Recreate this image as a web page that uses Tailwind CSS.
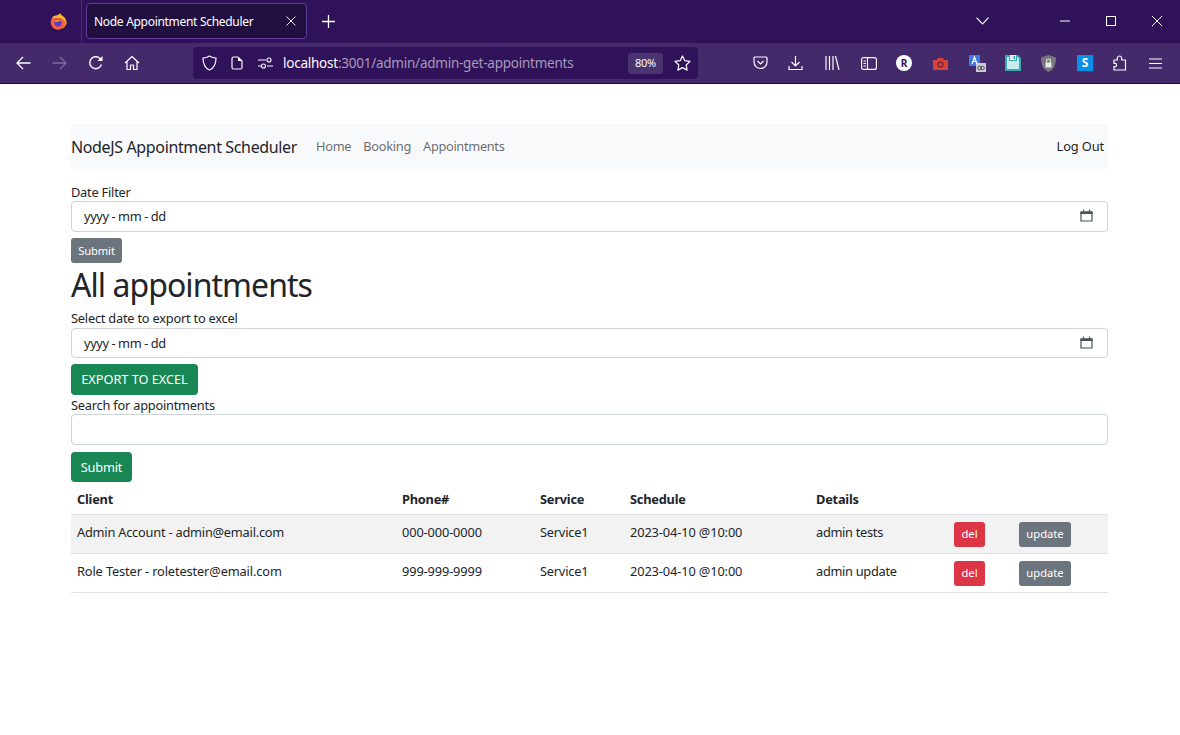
<!DOCTYPE html>
<html lang="en">
<head>
<meta charset="UTF-8" />
<title>Node Appointment Scheduler</title>
<script src="https://cdn.jsdelivr.net/npm/@tailwindcss/browser@4"></script>
</head>
<body class="bg-white h-[735px] w-[1180px] overflow-hidden font-['Noto_Sans',sans-serif] text-[#212529] text-[12.8px] tracking-[-0.22px]">

<!-- TAB BAR -->
<div class="h-[43px] bg-[#2f1259] flex items-start relative tracking-normal">
  <div class="w-[82px] h-[43px] border-r border-[#4a2f78] flex items-center justify-end pr-[14px] shrink-0">
    <svg class="mb-[1px]" width="17" height="17" viewBox="0 0 17 17">
      <circle cx="8" cy="9.500" r="7.300" fill="#f2603f"/>
      <path d="M1.500 5.500C3 3 5 2 7 2.500 8.500 1.500 9.500 1 11 0c-.5 1 0 2 1 2.500 2.500 1.500 4.500 3.500 4.500 7 0 1-.2 2-.6 3C15.500 8 13 5.500 9.500 5 6.500 4.500 3 5 1.500 5.500z" fill="#fdb52d"/>
      <path d="M15.500 6c1 2 1.200 5-.5 7.500-1 1.300-2 2-3 2.500 2-2.500 3.500-6 3.500-10z" fill="#ff8a2b"/>
      <circle cx="8" cy="9.800" r="3.700" fill="#5b3bc4"/>
      <path d="M4.500 8.500C6 6 10 6 11.500 8.500 10 7.500 8.500 8 7.500 8.500 6.500 9 5.500 9 4.500 8.500z" fill="#ff9f45"/>
    </svg>
  </div>
  <div class="ml-[4px] mt-[3px] w-[221px] h-[36px] rounded-[4px] border border-[#5f3f99] bg-[#21103f] flex items-center pl-[7px] pr-[10px] text-white text-[12px] shrink-0">
    <span class="tracking-[-0.3px] pt-[2px]">Node Appointment Scheduler</span>
    <svg class="ml-auto" width="10" height="10" viewBox="0 0 10 10"><path d="M0.500 0.500l9 9M9.500 0.500l-9 9" stroke="#e8e4f0" stroke-width="1"/></svg>
  </div>
  <svg class="ml-[15px] mt-[15px]" width="13" height="13" viewBox="0 0 13 13"><path d="M6.500 0v13M0 6.500h13" stroke="#fff" stroke-width="1.300"/></svg>
  <div class="ml-auto flex items-center h-[40px]">
    <svg class="mr-[71px] mt-[1px]" width="13" height="8" viewBox="0 0 13 8"><path d="M0.500 0.700L6.500 7l6-6.300" fill="none" stroke="#fff" stroke-width="1.100"/></svg>
    <svg class="mr-[36px] mt-[1px]" width="10" height="2" viewBox="0 0 10 2"><path d="M0 1h10" stroke="#fff" stroke-width="1"/></svg>
    <svg class="mr-[36px] mt-[1px]" width="10" height="10" viewBox="0 0 10 10"><rect x="0.500" y="0.500" width="9" height="9" fill="none" stroke="#fff" stroke-width="1"/></svg>
    <svg class="mr-[18px] mt-[1px]" width="10" height="10" viewBox="0 0 10 10"><path d="M0 0l10 10M10 0L0 10" stroke="#fff" stroke-width="1"/></svg>
  </div>
</div>

<!-- TOOLBAR -->
<div class="h-[41px] bg-[#44296b] border-b border-[#1d1035] flex items-center relative tracking-normal">
  <div class="w-[193px] flex items-center shrink-0">
    <svg class="ml-[16px]" width="15" height="14" viewBox="0 0 15 14"><path d="M14.500 7H1M7 1L1 7l6 6" fill="none" stroke="#fbfbfe" stroke-width="1.300"/></svg>
    <svg class="ml-[21px]" width="15" height="14" viewBox="0 0 15 14"><path d="M0.500 7H14M8 1l6 6-6 6" fill="none" stroke="#7d6a9c" stroke-width="1.300"/></svg>
    <svg class="ml-[21px]" width="16" height="16" viewBox="0 0 16 16"><path d="M13.500 9.500A6 6 0 1 1 11.500 3L14 5" fill="none" stroke="#fbfbfe" stroke-width="1.400"/><path d="M14.500 1v5h-5z" fill="#fbfbfe"/></svg>
    <svg class="ml-[20px]" width="16" height="16" viewBox="0 0 16 16"><path d="M1 8l7-6.500L15 8M3 6.500V14.500H6.500V10h3v4.500H13V6.500" fill="none" stroke="#fbfbfe" stroke-width="1.200" stroke-linejoin="round"/></svg>
  </div>
  <div class="w-[505px] h-[32px] bg-[#2f1259] rounded-[4px] flex items-center shrink-0 text-[13.500px] pl-[9px]">
    <svg width="15" height="16" viewBox="0 0 15 16"><path d="M7.500 1c2 1.300 4 2 6.500 2 0 6-1.500 10-6.500 12C2.500 13 1 9 1 3c2.500 0 4.500-.7 6.500-2z" fill="none" stroke="#fbfbfe" stroke-width="1.200"/></svg>
    <svg class="ml-[14px]" width="12" height="14" viewBox="0 0 12 14"><path d="M1 2.500A1.500 1.500 0 0 1 2.500 1H7l4 4v6.500A1.500 1.500 0 0 1 9.500 13h-7A1.500 1.500 0 0 1 1 11.500z" fill="none" stroke="#fbfbfe" stroke-width="1.200"/><path d="M7 1v4h4z" fill="#fbfbfe"/></svg>
    <svg class="ml-[15px]" width="15" height="12" viewBox="0 0 15 12"><path d="M0 3h8M0 9h3M9 9h6" stroke="#fbfbfe" stroke-width="1.100"/><circle cx="11" cy="3" r="2" fill="none" stroke="#fbfbfe" stroke-width="1.100"/><circle cx="5.500" cy="9" r="2" fill="none" stroke="#fbfbfe" stroke-width="1.100"/></svg>
    <span class="ml-[10px] pt-[1px] text-[#fbfbfe] tracking-[-0.24px]">localhost<span class="text-[#a79bbb]">:3001/admin/admin-get-appointments</span></span>
    <span class="ml-auto w-[35px] h-[21px] rounded-[3px] bg-[#4a3470] flex items-center justify-center text-[11px] tracking-[-0.3px] text-[#fbfbfe]">80%</span>
    <svg class="ml-[11px] mr-[7px]" width="17" height="16" viewBox="0 0 17 16"><path d="M8.500 1l2.300 4.700 5.200.7-3.800 3.600.9 5.100-4.600-2.500-4.600 2.500.9-5.100L1 6.400l5.200-.7z" fill="none" stroke="#fbfbfe" stroke-width="1.200" stroke-linejoin="round"/></svg>
  </div>
  <div class="flex-1 flex items-center h-full pl-[55px]">
    <div class="w-[36px]"><svg width="15" height="14" viewBox="0 0 15 14"><path d="M2 1h11a1 1 0 0 1 1 1v4a6.500 6.500 0 0 1-13 0V2a1 1 0 0 1 1-1z" fill="none" stroke="#fbfbfe" stroke-width="1.200"/><path d="M4.500 5l3 3 3-3" fill="none" stroke="#fbfbfe" stroke-width="1.200"/></svg></div>
    <div class="w-[36px] ml-[-1px] mr-[1px]"><svg width="15" height="15" viewBox="0 0 15 15"><path d="M7.500 0v9.500M3.500 6l4 4 4-4M1 10v3.500h13V10" fill="none" stroke="#fbfbfe" stroke-width="1.200"/></svg></div>
    <div class="w-[36px]"><svg width="15" height="14" viewBox="0 0 15 14"><path d="M1 0v14M4.500 0v14M8 0v14M10.500 0L14 14" fill="none" stroke="#fbfbfe" stroke-width="1.200"/></svg></div>
    <div class="w-[36px]"><svg width="16" height="13" viewBox="0 0 16 13"><rect x="0.600" y="0.600" width="14.800" height="11.800" rx="2" fill="none" stroke="#fbfbfe" stroke-width="1.200"/><path d="M6.500 1v11M2.500 4h2.500M2.500 6.500h2.500M2.500 9h2.500" stroke="#fbfbfe" stroke-width="1.100"/></svg></div>
    <div class="w-[36px] ml-[-1px] mr-[1px]"><div class="w-[16px] h-[16px] rounded-full bg-white text-[#2f1259] text-[10px] font-bold flex items-center justify-center">R</div></div>
    <div class="w-[36px]"><svg width="15" height="13" viewBox="0 0 15 13"><path d="M0 3h4l1-2h5l1 2h4v10H0z" fill="#d6423f"/><circle cx="7.500" cy="7.500" r="2.500" fill="none" stroke="#7d2230" stroke-width="1.300"/></svg></div>
    <div class="w-[36px]"><svg width="17" height="17" viewBox="0 0 17 17"><rect x="0" y="0" width="11" height="11" fill="#3f78e0"/><rect x="7" y="8" width="10" height="9" fill="#c9ccd6"/><path d="M3 9l2.500-7L8 9M4 6.500h3" fill="none" stroke="#fff" stroke-width="1.200"/><circle cx="10.500" cy="13" r="1.800" fill="none" stroke="#555" stroke-width="1"/><circle cx="13.500" cy="13" r="1.800" fill="none" stroke="#555" stroke-width="1"/></svg></div>
    <div class="w-[36px]"><svg width="16" height="16" viewBox="0 0 16 16"><path d="M0 0h13l3 3v13H0z" fill="#3aaab2"/><path d="M2 2h10.500l1.500 1.500V14H2z" fill="#c9ecef"/><rect x="4" y="0" width="8" height="6" fill="#3aaab2"/><rect x="5" y="0" width="6" height="5" fill="#dff4f5"/><rect x="8.500" y="1" width="1.500" height="3" fill="#3aaab2"/></svg></div>
    <div class="w-[36px]"><svg width="15" height="17" viewBox="0 0 15 17"><path d="M7.500 0L15 2.500c0 7-2 12-7.500 14.500C2 14.500 0 9.500 0 2.500z" fill="#77757d"/><rect x="4.500" y="7.500" width="6" height="5" fill="#e8e8ea"/><path d="M5.500 7.500V6a2 2 0 0 1 4 0v1.500" fill="none" stroke="#e8e8ea" stroke-width="1.100"/></svg></div>
    <div class="w-[36px]"><div class="w-[16px] h-[16px] bg-[#0a8fe6] text-white text-[12px] font-bold flex items-center justify-center shadow-[1px_1px_0_#0b4f94]">S</div></div>
    <div class="w-[36px]"><svg width="14" height="16" viewBox="0 0 14 16"><path d="M1 5h3.500C4 4 4 1 6.500 1S9 4 8.500 5H12.500V15H1v-3.500c1.500.5 2.500 0 2.500-1.500S2.500 8 1 8.500z" fill="none" stroke="#fbfbfe" stroke-width="1.200" stroke-linejoin="round"/></svg></div>
    <svg width="13" height="11" viewBox="0 0 13 11"><path d="M0 1h13M0 5.500h13M0 10h13" stroke="#fbfbfe" stroke-width="1.200"/></svg>
  </div>
</div>

<!-- PAGE -->
<div class="w-[1037px] ml-[71px] mt-[40px]">
  <nav class="h-[45px] bg-[#f8f9fa] flex items-center pr-[4px]">
    <span class="text-[16px] mr-[19px] tracking-[-0.36px]">NodeJS Appointment Scheduler</span>
    <a class="text-[#00000099] mr-[12px] tracking-[-0.28px] pt-[1px]">Home</a>
    <a class="text-[#00000099] mr-[12px] tracking-[-0.28px] pt-[1px]">Booking</a>
    <a class="text-[#00000099] tracking-[-0.33px] pt-[1px]">Appointments</a>
    <a class="ml-auto text-[#000000e6] tracking-[-0.1px] pt-[1px]">Log Out</a>
  </nav>

  <label class="block mt-[14px] h-[18px] leading-[18px]">Date Filter</label>
  <div class="h-[31px] border border-[#ced4da] rounded-[4px] flex items-center pl-[12px] pr-[14px]">
    <span class="tracking-[-0.4px] pt-[1px]">yyyy - mm - dd</span>
    <svg class="ml-auto mb-[2px]" width="13" height="13" viewBox="0 0 13 13"><path d="M1 3h11v9H1z" fill="none" stroke="#495057" stroke-width="1.200"/><path d="M0.500 2.500h12v2.500H0.500z" fill="#495057"/><path d="M3.500 0.500v2M9.500 0.500v2" stroke="#495057" stroke-width="1.200"/></svg>
  </div>
  <button class="mt-[6px] block h-[25px] w-[51px] rounded-[3px] bg-[#6c757d] text-white text-[11.200px] tracking-[-0.1px] pt-[1px]">Submit</button>

  <h1 class="text-[32px] leading-[38px] font-normal mt-[3px] tracking-[-0.95px]">All appointments</h1>

  <label class="block mt-[5px] h-[19px] leading-[18px]">Select date to export to excel</label>
  <div class="h-[30px] border border-[#ced4da] rounded-[4px] flex items-center pl-[12px] pr-[14px]">
    <span class="tracking-[-0.4px] pt-[1px]">yyyy - mm - dd</span>
    <svg class="ml-auto mb-[2px]" width="13" height="13" viewBox="0 0 13 13"><path d="M1 3h11v9H1z" fill="none" stroke="#495057" stroke-width="1.200"/><path d="M0.500 2.500h12v2.500H0.500z" fill="#495057"/><path d="M3.500 0.500v2M9.500 0.500v2" stroke="#495057" stroke-width="1.200"/></svg>
  </div>
  <button class="mt-[6px] block h-[31px] w-[127px] rounded-[4px] bg-[#198754] text-white tracking-[-0.05px] pt-[1px]">EXPORT TO EXCEL</button>

  <label class="block mt-[1px] h-[18px] leading-[18px]">Search for appointments</label>
  <div class="h-[31px] border border-[#ced4da] rounded-[4px]"></div>
  <button class="mt-[7px] block h-[30px] w-[61px] rounded-[4px] bg-[#198754] text-white pt-[1px]">Submit</button>

  <table class="mt-[5px] w-[1037px] table-fixed border-collapse">
    <colgroup>
      <col class="w-[325px]"><col class="w-[138px]"><col class="w-[90px]"><col class="w-[186px]"><col class="w-[138px]"><col class="w-[65px]"><col class="w-[95px]">
    </colgroup>
    <thead>
      <tr class="h-[27px] border-b border-[#dee2e6] text-left">
        <th class="px-[6px] pb-[2px] font-bold">Client</th>
        <th class="px-[6px] pb-[2px] font-bold">Phone#</th>
        <th class="px-[6px] pb-[2px] font-bold">Service</th>
        <th class="px-[6px] pb-[2px] font-bold">Schedule</th>
        <th class="px-[6px] pb-[2px] font-bold">Details</th>
        <th></th>
        <th></th>
      </tr>
    </thead>
    <tbody>
      <tr class="h-[39px] border-b border-[#dee2e6] bg-[#f2f2f2]">
        <td class="px-[6px] pb-[2px]">Admin Account - admin@email.com</td>
        <td class="px-[6px] pb-[2px] tracking-[-0.13px]">000-000-0000</td>
        <td class="px-[6px] pb-[2px]">Service1</td>
        <td class="px-[6px] pb-[2px] tracking-[-0.12px]">2023-04-10 @10:00</td>
        <td class="px-[6px] pb-[2px] tracking-[-0.3px]">admin tests</td>
        <td class="px-[6px] pt-[2px]"><button class="block h-[25px] w-[31px] rounded-[3px] bg-[#dc3545] text-white text-[11.200px] tracking-normal">del</button></td>
        <td class="px-[6px] pt-[2px]"><button class="block h-[25px] w-[52px] rounded-[3px] bg-[#6c757d] text-white text-[11.200px] tracking-normal">update</button></td>
      </tr>
      <tr class="h-[39px] border-b border-[#dee2e6]">
        <td class="px-[6px] pb-[2px] tracking-[-0.13px]">Role Tester - roletester@email.com</td>
        <td class="px-[6px] pb-[2px] tracking-[-0.13px]">999-999-9999</td>
        <td class="px-[6px] pb-[2px]">Service1</td>
        <td class="px-[6px] pb-[2px] tracking-[-0.12px]">2023-04-10 @10:00</td>
        <td class="px-[6px] pb-[2px] tracking-[-0.3px]">admin update</td>
        <td class="px-[6px] pt-[2px]"><button class="block h-[25px] w-[31px] rounded-[3px] bg-[#dc3545] text-white text-[11.200px] tracking-normal">del</button></td>
        <td class="px-[6px] pt-[2px]"><button class="block h-[25px] w-[52px] rounded-[3px] bg-[#6c757d] text-white text-[11.200px] tracking-normal">update</button></td>
      </tr>
    </tbody>
  </table>
</div>

</body>
</html>
